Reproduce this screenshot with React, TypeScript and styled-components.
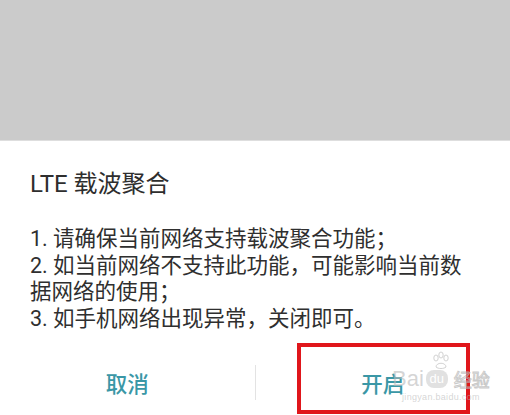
import React from 'react';
import styled, { createGlobalStyle } from 'styled-components';

const GlobalStyle = createGlobalStyle`
  html, body {
    margin: 0;
    padding: 0;
    background: #ffffff;
    overflow: hidden;
  }
  body {
    font-family: Roboto, "Noto Sans CJK SC", sans-serif;
  }
`;

const Screen = styled.div`
  width: 510px;
  height: 415px;
  display: flex;
  flex-direction: column;
  overflow: hidden;
`;

const Scrim = styled.div`
  height: 144px;
  background: #cbcbcb;
  border-bottom: 1px solid #dedede;
`;

const Dialog = styled.div`
  flex: 1;
  display: flex;
  flex-direction: column;
  background: #ffffff;
  padding-top: 27px;
`;

const Title = styled.h2`
  margin: 0 0 0 30px;
  font-size: 24px;
  line-height: 32px;
  font-weight: 400;
  color: #2e2e2e;
`;

const Body = styled.div`
  margin: 26px 0 0 30px;
  width: 452px;
  font-size: 21.5px;
  line-height: 26.5px;
  color: #2f2f2f;
`;

const Line = styled.p`
  margin: 0;
`;

const Actions = styled.div`
  position: relative;
  margin-top: 17px;
  height: 66px;
  display: grid;
  grid-template-columns: 1fr 1px 1fr;
  align-items: center;
`;

const ActionButton = styled.button`
  position: relative;
  height: 100%;
  border: none;
  background: transparent;
  padding: 0;
  font-family: Roboto, "Noto Sans CJK SC", sans-serif;
  font-size: 21.5px;
  font-weight: 500;
  color: #3a97a6;
`;

const Divider = styled.div`
  height: 35px;
  background: #e3e3e3;
`;

const Highlight = styled.div`
  position: absolute;
  left: 41px;
  top: -6px;
  width: 165px;
  height: 63px;
  border: 4px solid #e0161b;
  pointer-events: none;
`;

const Watermark = styled.div`
  position: absolute;
  left: 392px;
  top: 18px;
  display: flex;
  flex-direction: column;
  align-items: center;
  color: rgba(185, 185, 185, 0.6);
  pointer-events: none;
  font-family: Arial, "Liberation Sans", sans-serif;
`;

const MarkRow = styled.div`
  display: flex;
  align-items: center;
  gap: 2px;
  font-size: 22px;
  line-height: 24px;
`;

const DuBadge = styled.span`
  display: inline-flex;
  align-items: center;
  justify-content: center;
  width: 22px;
  height: 18px;
  border-radius: 8px;
  background: rgba(195, 195, 195, 0.5);
  color: #ffffff;
  font-size: 13px;
`;

const Jing = styled.span`
  font-family: "Noto Sans CJK SC", sans-serif;
  font-size: 18px;
  margin-left: 4px;
  color: transparent;
  -webkit-text-stroke: 1px rgba(185, 185, 185, 0.75);
`;

const MarkUrl = styled.div`
  font-size: 9px;
  line-height: 12px;
  letter-spacing: 0.3px;
`;

const Paw = () => (
  <svg width="22" height="20" viewBox="0 0 22 20" style={{ position: 'absolute', left: 38, top: -16 }}>
    <g fill="none" stroke="rgba(195,195,195,0.75)" strokeWidth="1">
      <ellipse cx="6" cy="7" rx="2.2" ry="3" />
      <ellipse cx="11" cy="4" rx="2.2" ry="3" />
      <ellipse cx="16" cy="7" rx="2.2" ry="3" />
      <path d="M6 16 C6 11, 16 11, 16 16 C14 18, 8 18, 6 16 Z" />
    </g>
  </svg>
);

export default function App() {
  return (
    <>
      <GlobalStyle />
      <Screen>
        <Scrim />
        <Dialog>
          <Title>LTE 载波聚合</Title>
          <Body>
            <Line>1. 请确保当前网络支持载波聚合功能；</Line>
            <Line>2. 如当前网络不支持此功能，可能影响当前数据网络的使用；</Line>
            <Line>3. 如手机网络出现异常，关闭即可。</Line>
          </Body>
          <Actions>
            <ActionButton>取消</ActionButton>
            <Divider />
            <ActionButton>
              开启
              <Highlight />
            </ActionButton>
            <Watermark>
              <Paw />
              <MarkRow>
                <span>Bai</span>
                <DuBadge>du</DuBadge>
                <Jing>经验</Jing>
              </MarkRow>
              <MarkUrl>jingyan.baidu.com</MarkUrl>
            </Watermark>
          </Actions>
        </Dialog>
      </Screen>
    </>
  );
}
